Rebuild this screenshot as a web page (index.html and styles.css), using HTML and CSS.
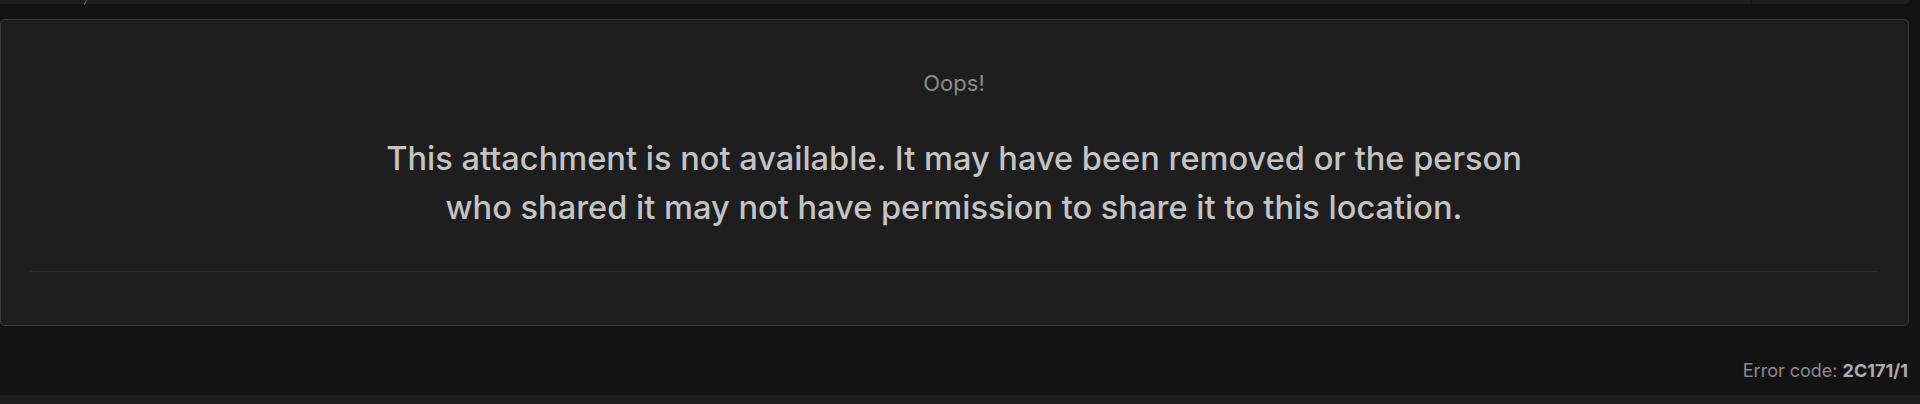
FILE: index.html
```html
<!DOCTYPE html>
<html lang="en">
<head>
    <meta charset="UTF-8" />
    <title>Attachment unavailable</title>
    <link rel="stylesheet" href="styles.css">
</head>
<body>

<!-- Toolbar edge peeking in from above -->
<div class="toolbar">
    <div class="toolbar-main"><span class="toolbar-mark"></span></div>
    <div class="toolbar-side"></div>
</div>

<!-- Error panel -->
<div class="panel">
    <p class="oops">Oops!</p>
    <p class="message">This attachment is not available. It may have been removed or the person<br>who shared it may not have permission to share it to this location.</p>
    <div class="divider"></div>
</div>

<p class="error-code">Error code: <b>2C171/1</b></p>

<div class="footer-strip"></div>

</body>
</html>
```

FILE: styles.css
```css
body {
    margin: 0;
    padding: 0;
    background-color: #131313;
    font-family: Inter, "Liberation Sans", sans-serif;
    height: 404px;
    overflow: hidden;
}

.toolbar {
    display: flex;
    height: 4px;
    margin-right: 11px;
    background-color: #1f1f1f;
    border-radius: 0 0 5px 0;
}

.toolbar-main {
    flex: 1;
    position: relative;
}

.toolbar-mark {
    position: absolute;
    left: 85px;
    top: -1px;
    width: 1px;
    height: 6px;
    background-color: #6a6a6a;
    transform: rotate(25deg);
}

.toolbar-side {
    width: 157px;
    border-left: 1px solid #171717;
}

.panel {
    margin: 15px 11px 0 0;
    border: 1px solid #3a3a3a;
    border-radius: 5px;
    background-color: #1e1e1e;
    padding: 50px 30px 53px 29px;
    text-align: center;
}

.oops {
    margin: 0;
    font-size: 22px;
    line-height: 26px;
    color: #8b8b8b;
}

.message {
    margin: 38px 0 39px;
    font-size: 32.6px;
    font-weight: 500;
    line-height: 49px;
    color: #c3c3c3;
}

.divider {
    height: 1px;
    background-color: #2b2b2b;
}

.error-code {
    margin: 34px 12px 0 0;
    text-align: right;
    font-size: 18px;
    line-height: 22px;
    color: #8a8a8a;
}

.error-code b {
    color: #ababab;
}

.footer-strip {
    margin-top: 13px;
    height: 10px;
    background-color: #1e1e1e;
}
```
